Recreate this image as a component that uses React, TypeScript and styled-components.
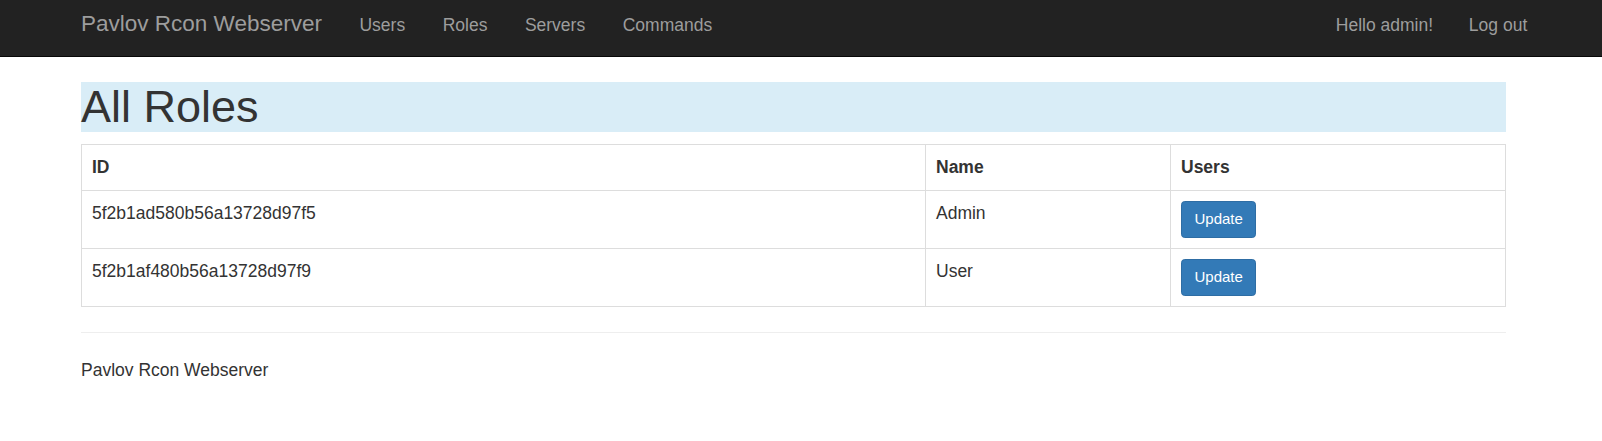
import React from "react";
import styled, { createGlobalStyle } from "styled-components";

const GlobalStyle = createGlobalStyle`
  html, body {
    margin: 0;
    padding: 0;
    background: #ffffff;
  }
  body {
    font-family: "Liberation Sans", Arial, Helvetica, sans-serif;
    font-size: 17.5px;
    line-height: 25px;
    color: #333333;
  }
  * { box-sizing: border-box; }
`;

const NavBar = styled.nav`
  height: 57px;
  background: #222222;
  border-bottom: 1px solid #080808;
  display: flex;
  align-items: flex-start;
  padding-left: 81px;
  padding-right: 56px;
`;

const Brand = styled.a`
  font-size: 22.5px;
  line-height: 25px;
  color: #9d9d9d;
  text-decoration: none;
  padding: 11.25px 18.75px 0 0;
  white-space: nowrap;
`;

const NavList = styled.ul<{ $right?: boolean }>`
  list-style: none;
  margin: 0;
  margin-left: ${(p) => (p.$right ? "auto" : "0")};
  padding: 0;
  display: flex;
`;

const NavLink = styled.a<{ $tight?: boolean }>`
  display: block;
  font-size: 17.5px;
  line-height: 25px;
  color: #9d9d9d;
  text-decoration: none;
  padding: 12.5px ${(p) => (p.$tight ? "17px" : "18.75px")} 0 18.75px;
  white-space: nowrap;
`;

const Container = styled.main`
  width: 1425px;
  margin-left: 81px;
`;

const Title = styled.h1`
  margin: 25px 0 12.5px;
  font-size: 45px;
  line-height: 49.5px;
  font-weight: 500;
  color: #333333;
  background: #d9edf7;
`;

const Table = styled.table`
  width: 100%;
  border-collapse: collapse;
  border-spacing: 0;
  border: 1px solid #dddddd;
  margin-bottom: 25px;
`;

const Th = styled.th<{ $w?: number }>`
  width: ${(p) => (p.$w ? `${p.$w}px` : "auto")};
  text-align: left;
  font-weight: bold;
  padding: 10px;
  line-height: 25px;
  border: 1px solid #dddddd;
  vertical-align: bottom;
`;

const Td = styled.td`
  padding: 10px;
  line-height: 25px;
  border: 1px solid #dddddd;
  vertical-align: top;
`;

const Button = styled.button`
  display: inline-block;
  font-family: inherit;
  font-size: 15px;
  line-height: 22.5px;
  padding: 6.25px 12.5px;
  color: #ffffff;
  background: #337ab7;
  border: 1px solid #2e6da4;
  border-radius: 3.75px;
  cursor: pointer;
`;

const Rule = styled.hr`
  margin: 25px 0;
  border: 0;
  border-top: 1px solid #eeeeee;
`;

const Footer = styled.footer`
  p {
    margin: 0 0 12.5px;
  }
`;

const roles = [
  { id: "5f2b1ad580b56a13728d97f5", name: "Admin" },
  { id: "5f2b1af480b56a13728d97f9", name: "User" },
];

export default function App() {
  return (
    <>
      <GlobalStyle />
      <NavBar>
        <Brand href="#">Pavlov Rcon Webserver</Brand>
        <NavList>
          <li><NavLink href="#">Users</NavLink></li>
          <li><NavLink href="#">Roles</NavLink></li>
          <li><NavLink href="#">Servers</NavLink></li>
          <li><NavLink href="#">Commands</NavLink></li>
        </NavList>
        <NavList $right>
          <li><NavLink href="#" $tight>Hello admin!</NavLink></li>
          <li><NavLink href="#">Log out</NavLink></li>
        </NavList>
      </NavBar>
      <Container>
        <Title>All Roles</Title>
        <Table>
          <thead>
            <tr>
              <Th $w={844}>ID</Th>
              <Th $w={245}>Name</Th>
              <Th>Users</Th>
            </tr>
          </thead>
          <tbody>
            {roles.map((r) => (
              <tr key={r.id}>
                <Td>{r.id}</Td>
                <Td>{r.name}</Td>
                <Td>
                  <Button type="button">Update</Button>
                </Td>
              </tr>
            ))}
          </tbody>
        </Table>
        <Rule />
        <Footer>
          <p>Pavlov Rcon Webserver</p>
        </Footer>
      </Container>
    </>
  );
}
